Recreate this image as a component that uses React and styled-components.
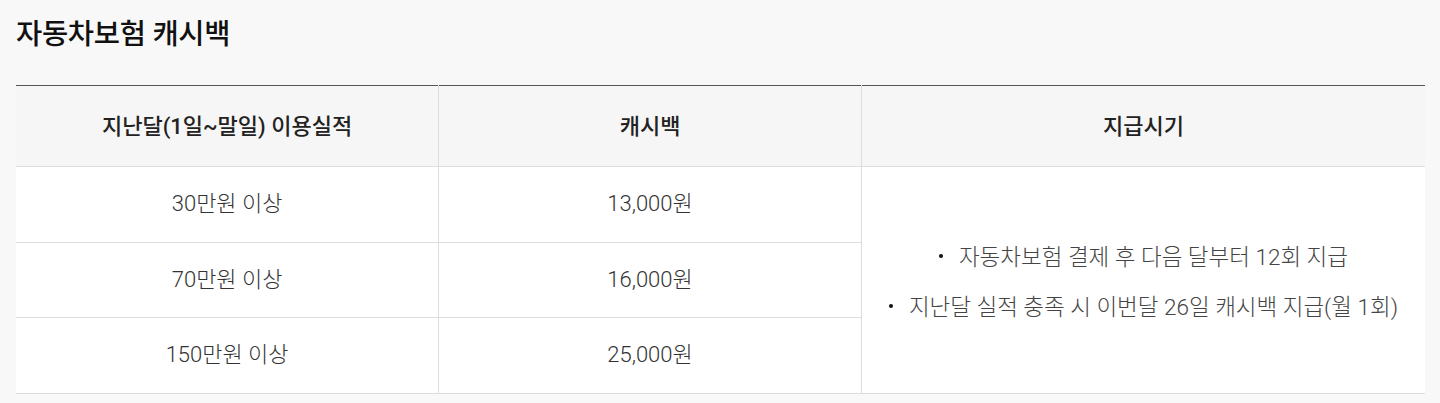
import React from 'react';
import styled, { createGlobalStyle } from 'styled-components';

const GlobalStyle = createGlobalStyle`
  html, body {
    margin: 0;
    padding: 0;
    background: #f8f8f8;
  }
  body {
    font-family: "Roboto", "Noto Sans CJK KR", "Noto Sans", sans-serif;
    color: #333;
  }
`;

const Section = styled.section({
  padding: '0 15px 0 16px',
});

const Title = styled.h2({
  margin: 0,
  paddingTop: 15,
  fontSize: 28.5,
  lineHeight: '40px',
  fontWeight: 500,
  color: '#111',
  letterSpacing: '-0.3px',
});

const Table = styled.table({
  width: '100%',
  marginTop: 30,
  borderCollapse: 'collapse',
  tableLayout: 'fixed',
  borderTop: '1px solid #555',
  borderBottom: '1px solid #ddd',
});

const HeadCell = styled.th({
  height: 81,
  padding: '0 0 4px',
  boxSizing: 'border-box',
  background: '#f6f6f6',
  fontSize: 22,
  fontWeight: 500,
  color: '#222',
  textAlign: 'center',
  borderBottom: '1px solid #ddd',
  borderLeft: '1px solid #ddd',
  '&:first-child': {
    borderLeft: 'none',
  },
});

const Cell = styled.td({
  height: 75.5,
  padding: '0 0 6px',
  boxSizing: 'border-box',
  background: '#fff',
  fontSize: 22,
  fontWeight: 300,
  color: '#333',
  textAlign: 'center',
  borderBottom: '1px solid #ddd',
  borderLeft: '1px solid #ddd',
  '&:first-child': {
    borderLeft: 'none',
  },
});

const NoteList = styled.ul({
  margin: 0,
  padding: '10px 0 0',
  listStyle: 'none',
  display: 'flex',
  flexDirection: 'column',
  gap: 18,
});

const NoteItem = styled.li({
  fontSize: 22.5,
  lineHeight: '32px',
  fontWeight: 300,
  color: '#444',
  '&::before': {
    content: '""',
    display: 'inline-block',
    width: 4,
    height: 4,
    borderRadius: '50%',
    background: '#111',
    marginRight: 16,
    verticalAlign: 'middle',
    position: 'relative',
    top: -3,
  },
});

const rows = [
  { spend: '30만원 이상', amount: '13,000원' },
  { spend: '70만원 이상', amount: '16,000원' },
  { spend: '150만원 이상', amount: '25,000원' },
];

const notes = [
  '자동차보험 결제 후 다음 달부터 12회 지급',
  '지난달 실적 충족 시 이번달 26일 캐시백 지급(월 1회)',
];

export default function App() {
  return (
    <>
      <GlobalStyle />
      <Section>
        <Title>자동차보험 캐시백</Title>
        <Table>
          <colgroup>
            <col style={{ width: '30%' }} />
            <col style={{ width: '30%' }} />
            <col style={{ width: '40%' }} />
          </colgroup>
          <thead>
            <tr>
              <HeadCell>지난달(1일~말일) 이용실적</HeadCell>
              <HeadCell>캐시백</HeadCell>
              <HeadCell>지급시기</HeadCell>
            </tr>
          </thead>
          <tbody>
            {rows.map((row, index) => (
              <tr key={row.spend}>
                <Cell>{row.spend}</Cell>
                <Cell>{row.amount}</Cell>
                {index === 0 && (
                  <Cell rowSpan={rows.length}>
                    <NoteList>
                      {notes.map((note) => (
                        <NoteItem key={note}>{note}</NoteItem>
                      ))}
                    </NoteList>
                  </Cell>
                )}
              </tr>
            ))}
          </tbody>
        </Table>
      </Section>
    </>
  );
}
